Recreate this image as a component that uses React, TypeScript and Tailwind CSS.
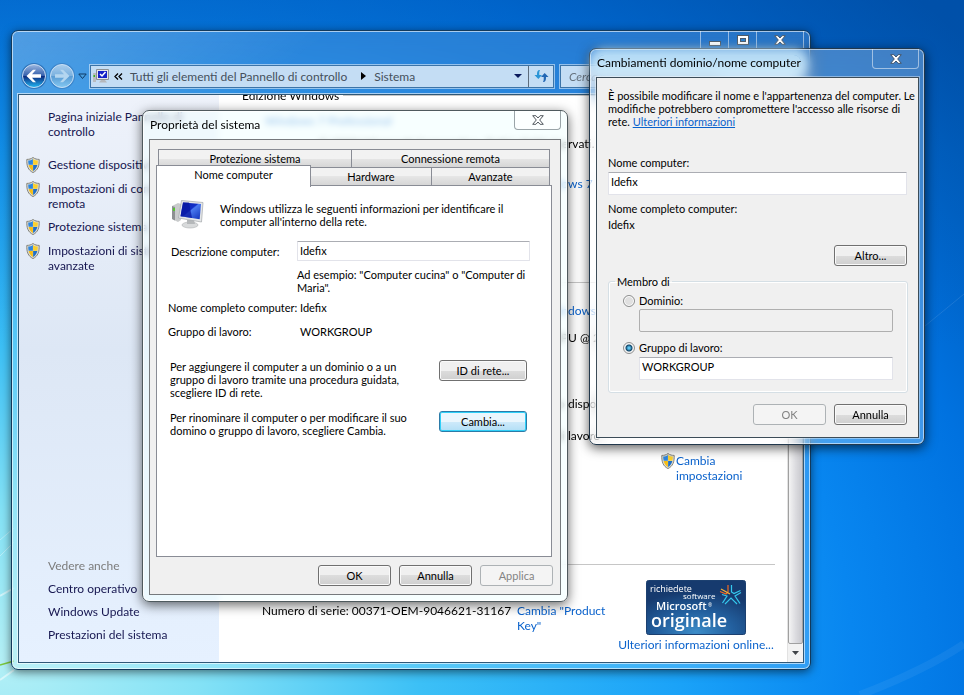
import type { ReactNode } from "react";

const segoe = "font-['Lato','Open_Sans',sans-serif]";

function Shield() {
  return (
    <svg viewBox="0 0 14 16" className="h-4 w-[14px] shrink-0" aria-hidden="true">
      <path d="M7 .5C5 2 3 2.4.8 2.4.6 9 2 13 7 15.6 12 13 13.4 9 13.2 2.4 11 2.4 9 2 7 .5Z" fill="#dcdcd4" stroke="#85857d" />
      <path d="M6.900 2C5.500 3 4 3.500 2.200 3.600c0 1.600.1 2.900.5 4.200h4.200Z" fill="#2e86de" />
      <path d="M7.100 2c1.400 1 2.900 1.500 4.700 1.600 0 1.600-.1 2.900-.5 4.200H7.100Z" fill="#fbd02c" />
      <path d="M6.900 8H2.700c.7 2.800 2 4.700 4.200 6Z" fill="#f6bd14" />
      <path d="M7.100 8h4.200c-.7 2.800-2 4.700-4.200 6Z" fill="#1f6fc8" />
    </svg>
  );
}

function ComputerIcon() {
  return (
    <svg viewBox="0 0 32 29" className="h-[29px] w-8 shrink-0" aria-hidden="true">
      <defs>
        <linearGradient id="screen" x1="0" y1="0" x2="1" y2="1">
          <stop offset="0" stopColor="#0a1ea8" />
          <stop offset="0.45" stopColor="#1230c8" />
          <stop offset="0.5" stopColor="#4a7af0" />
          <stop offset="1" stopColor="#1030b8" />
        </linearGradient>
      </defs>
      <path d="M0 6 6 3l3 1v16l-3 2-6-3Z" fill="#c9cbcc" />
      <path d="M0 6l3 1v13.500l-3-1.500Z" fill="#8d9092" />
      <path d="M1 8h2v3H1Z" fill="#54c52e" />
      <ellipse cx="18" cy="25" rx="8" ry="3" fill="#d8dadb" stroke="#adb0b2" strokeWidth=".6" />
      <path d="M15 20h7l1 4h-8Z" fill="#b5b8ba" />
      <path d="M9.500.5 31 2.500 29.500 22 6.500 18Z" fill="#e4e6e8" stroke="#a4a8ab" strokeWidth=".7" />
      <path d="M11 2.500 29 4l-1.300 15.300L8.500 16.300Z" fill="url(#screen)" />
      <path d="M11 2.500h6l3 15.500-11.500-1.700Z" fill="#0817a0" opacity=".75" />
    </svg>
  );
}

function SystemIcon() {
  return (
    <svg viewBox="0 0 16 14" className="h-[14px] w-4 shrink-0" aria-hidden="true">
      <path d="M0 4h3v9H0Z" fill="#b8bcc0" />
      <path d="M.5 6h1.500v2H.5Z" fill="#35b520" />
      <path d="M3.500.5h12v10h-12Z" fill="#e5e7ea" stroke="#8c9094" />
      <path d="M5 2h9v7H5Z" fill="#1420c8" />
      <path d="m7 5 2 2 3.500-4" stroke="#fff" strokeWidth="1.500" fill="none" />
      <path d="M8 11h4l2 2.500H6Z" fill="#b5b8bc" />
    </svg>
  );
}

function NavButtons() {
  return (
    <div className="flex items-center">
      <button aria-label="Indietro" className="block">
        <svg viewBox="0 0 28 28" className="h-7 w-7" aria-hidden="true">
          <defs>
            <linearGradient id="back" x1="0" y1="0" x2="0" y2="1">
              <stop offset="0" stopColor="#9db8e0" />
              <stop offset=".48" stopColor="#3560ac" />
              <stop offset=".52" stopColor="#0b2c80" />
              <stop offset="1" stopColor="#22b8f4" />
            </linearGradient>
          </defs>
          <circle cx="14" cy="14" r="13" fill="#2a6cb0" opacity=".8" />
          <circle cx="14" cy="14" r="11.500" fill="url(#back)" stroke="#c9dcf2" />
          <path d="M6.500 14 13 7.800h3l-4 4.500h9v3.400h-9l4 4.500h-3Z" fill="#fff" />
        </svg>
      </button>
      <button aria-label="Avanti" className="block">
        <svg viewBox="0 0 28 28" className="h-7 w-7" aria-hidden="true">
          <defs>
            <linearGradient id="forward" x1="0" y1="0" x2="0" y2="1">
              <stop offset="0" stopColor="#a9cdec" />
              <stop offset=".48" stopColor="#7cb2e0" />
              <stop offset=".52" stopColor="#5a9cd4" />
              <stop offset="1" stopColor="#84c8f2" />
            </linearGradient>
          </defs>
          <circle cx="14" cy="14" r="13" fill="#3a80c4" opacity=".8" />
          <circle cx="14" cy="14" r="11.500" fill="url(#forward)" stroke="#c9e0f5" />
          <path d="M21.500 14 15 7.800h-3l4 4.500H7v3.400h9l-4 4.500h3Z" fill="#b4d6f0" />
        </svg>
      </button>
      <button aria-label="Pagine recenti" className="block px-0.5">
        <svg viewBox="0 0 9 7" className="h-[7px] w-[9px]" aria-hidden="true">
          <path d="M.8 1h7.400L4.500 5.500Z" fill="#4aa0e0" stroke="#0e3a66" />
        </svg>
      </button>
    </div>
  );
}

function CloseGlyph({ fill, stroke }: { fill: string; stroke: string }) {
  return (
    <svg viewBox="0 0 12 10" className="h-[10px] w-3" aria-hidden="true">
      <path
        d="M.7.7h3.200L6 3 8.100.7h3.200L7.700 5l3.600 4.300H8.100L6 7 3.900 9.300H.7L4.300 5Z"
        fill={fill}
        stroke={stroke}
      />
    </svg>
  );
}

function PushButton({
  children,
  wide,
  focused,
  disabled,
}: {
  children: ReactNode;
  wide?: boolean;
  focused?: boolean;
  disabled?: boolean;
}) {
  const tone = disabled
    ? "border-[#adb2b5] bg-[#f4f4f4] text-[#838383]"
    : focused
      ? "border-[#2c7ba8] bg-linear-to-b from-[#eaf6fd] from-50% via-[#cfeafa] via-50% to-[#b2dff6] shadow-[inset_0_0_0_1px_#2fd0f8]"
      : "border-[#707070] bg-linear-to-b from-[#f0f0f0] from-50% via-[#dddddd] via-50% to-[#cfcfcf] shadow-[inset_0_0_0_1px_#fafafa]";
  return (
    <button
      disabled={disabled}
      className={`flex h-[21px] items-center justify-center rounded-[3px] border ${wide ? "w-[88px]" : "w-[73px]"} ${tone}`}
    >
      {children}
    </button>
  );
}

function TaskLink({ children }: { children: ReactNode }) {
  return (
    <a href="#" className="flex gap-2">
      <Shield />
      <span className="whitespace-nowrap">{children}</span>
    </a>
  );
}

/* A line whose lead ends where the detail column's second half begins. */
function InfoLine({ lead, tail, link, className }: { lead: string; tail: string; link?: boolean; className: string }) {
  return (
    <p className={`flex whitespace-pre ${link ? "text-[#0a62cc]" : ""} ${className}`}>
      <span className="w-[326px] shrink-0 text-right">{lead}</span>
      <span>{tail}</span>
    </p>
  );
}

function GenuineBadge() {
  return (
    <svg viewBox="0 0 100 55" className="h-[55px] w-[100px]" role="img" aria-label="Software Microsoft originale">
      <defs>
        <radialGradient id="badge" cx=".5" cy=".95" r=".75">
          <stop offset="0" stopColor="#3c8cc8" />
          <stop offset=".5" stopColor="#23609f" />
          <stop offset="1" stopColor="#163a6e" />
        </radialGradient>
      </defs>
      <rect x=".5" y=".5" width="99" height="54" rx="2" fill="url(#badge)" stroke="#1c4070" />
      <g fill="#fff" fontFamily="'Open Sans','Noto Sans',sans-serif">
        <text x="4" y="12" fontSize="9">richiedete</text>
        <text x="37" y="19" fontSize="8">software</text>
        <text x="10" y="30" fontSize="11" fontWeight="600">Microsoft</text>
        <text x="62" y="27" fontSize="5">®</text>
        <text x="5" y="47" fontSize="18" fontWeight="600">originale</text>
      </g>
      <g fill="none" strokeWidth="1.200">
        <path d="M82 5v7l-2 2-6-2.500" stroke="#f26a22" />
        <path d="M84 14 75 9" stroke="#f9b233" />
        <path d="M85.500 5v7l2.500 1.500 6.500-3M95 12.500l-6 3.500 5 7.500M91 24l-6-6-6 6M76.500 23l4.500-7-5-1.500" stroke="#35c8ee" />
      </g>
    </svg>
  );
}

function SystemWindow() {
  return (
    <section
      aria-label="Sistema"
      className={`absolute left-[11px] top-[30px] flex h-[640px] w-[800px] flex-col rounded-[7px] border border-[#123a5c] bg-linear-to-br from-white/30 via-white/15 via-20% to-white/15 px-[6px] pb-[6px] text-[12px] leading-[15px] shadow-[inset_0_0_0_1px_rgba(255,255,255,0.6),0_2px_10px_rgba(0,0,0,0.55)] backdrop-blur-sm ${segoe}`}
    >
      <div className="flex h-[18px] justify-end">
        <div className="flex divide-x divide-white/50 border-x border-white/50">
          <button aria-label="Riduci a icona" className="flex w-[28px] items-center justify-center">
            <span className="mt-1.5 h-[5px] w-3 border border-[#4c5a68] bg-white" />
          </button>
          <button aria-label="Ingrandisci" className="flex w-[28px] items-center justify-center">
            <span className="flex h-[10px] w-3 items-center justify-center border border-[#4c5a68] bg-white">
              <span className="h-1 w-1.5 border border-[#4c5a68] bg-[#2c82d0]" />
            </span>
          </button>
          <button aria-label="Chiudi" className="flex w-[46px] items-center justify-center">
            <CloseGlyph fill="#fff" stroke="#4c5a68" />
          </button>
        </div>
      </div>

      <div className="mt-[13px] flex h-7 items-center pl-[2px]">
        <NavButtons />
        <div className="ml-px flex h-[23px] w-[464px] items-center border border-[#3c74a8] bg-[#c4ddf4] pl-[2px] text-[#45505c] outline outline-white/50">
          <SystemIcon />
          <svg viewBox="0 0 9 7" className="ml-[5px] h-[7px] w-[9px]" aria-hidden="true">
            <path d="M4 .5 1 3.500l3 3M8 .5 5 3.500l3 3" fill="none" stroke="#000" strokeWidth="1.300" />
          </svg>
          <span className="ml-[7px] whitespace-nowrap">Tutti gli elementi del Pannello di controllo</span>
          <svg viewBox="0 0 5 8" className="ml-3.5 mr-2 h-2 w-[5px]" aria-hidden="true">
            <path d="M0 0v8l5-4Z" fill="#000" />
          </svg>
          <span>Sistema</span>
          <button aria-label="Posizioni precedenti" className="ml-auto pr-1.5">
            <svg viewBox="0 0 8 4" className="h-1 w-2" aria-hidden="true">
              <path d="M0 0h8L4 4Z" fill="#0a1a5c" />
            </svg>
          </button>
          <button aria-label="Aggiorna" className="flex h-full w-[25px] items-center justify-center border-l border-[#5c6c7c]">
            <svg viewBox="0 0 15 14" className="h-[14px] w-[15px]" aria-hidden="true">
              <path d="M6 1C3.500 1 3 2.500 3 6H.5L4.300 10 8 6H5.300C5.300 4 5 3 6 1Z" fill="#2b95d6" />
              <path d="M9 13c2.500 0 3-1.500 3-5h2.500L10.700 4 7 8h2.700c0 2 .3 3-.7 5Z" fill="#2166b4" />
            </svg>
          </button>
        </div>
        <input
          aria-label="Cerca nel Pannello di controllo"
          placeholder="Cerca nel Pannello di controllo"
          className="ml-[6px] h-[23px] min-w-0 flex-1 border border-[#3c74a8] bg-[#c4ddf4] px-2 italic outline outline-white/50 placeholder:text-[#66727e]"
        />
      </div>

      <div className="mt-[4px] flex min-h-0 flex-1 overflow-hidden border border-[#2f5878] bg-white outline outline-white/60">
        <nav className="flex w-[200px] shrink-0 flex-col justify-between bg-linear-to-b from-[#eef2fa] via-[#dde7f5] via-45% to-[#e6f1ff] text-[#161650]">
          <div className="flex flex-col gap-2 pl-[7px] pt-[14px]">
            <a href="#" className="mb-[10px] whitespace-nowrap pl-[22px]">
              Pagina iniziale Pannello di<br />controllo
            </a>
            <TaskLink>Gestione dispositivi</TaskLink>
            <TaskLink>Impostazioni di connessione<br />remota</TaskLink>
            <TaskLink>Protezione sistema</TaskLink>
            <TaskLink>Impostazioni di sistema<br />avanzate</TaskLink>
          </div>
          <div className="flex flex-col gap-2 pb-[20px] pl-[29px]">
            <span className="text-[#7c7c7c]">Vedere anche</span>
            <a href="#">Centro operativo</a>
            <a href="#">Windows Update</a>
            <a href="#">Prestazioni del sistema</a>
          </div>
        </nav>

        <main className="min-w-0 flex-1 overflow-hidden pl-[23px] pr-3">
          <h2 className="-mt-[7px] flex items-center gap-1">
            Edizione Windows<span className="h-px flex-1 bg-[#c6c6c6]" />
          </h2>
          <p className="mt-[10px] pl-[23px] text-[#0a62cc]">Windows 7 Professional</p>
          <InfoLine className="mt-2" lead="© 2009 Microsoft Corporation. Tutti i diritti rise" tail="rvati." />
          <InfoLine className="mt-[25px]" link lead="Ottieni ulteriori funzionalità con Windo" tail="ws 7" />
          <h2 className="mt-[84px] flex items-center gap-1">
            Sistema<span className="h-px flex-1 bg-[#c6c6c6]" />
          </h2>
          <InfoLine className="mt-[13px]" link lead="Indice prestazioni Win" tail="dows" />
          <InfoLine className="mt-3" lead="Intel(R) Core(TM)2 CP" tail="U @ 2.40GHz" />
          <InfoLine className="mt-[51px]" lead="Nessun input penna o tocco " tail="disponibile" />
          <InfoLine className="mt-[17px]" lead="Impostazioni relative a gruppo di " tail="lavoro" />
          <a href="#" className="mt-[10px] flex gap-px pl-[419px] text-[#0a62cc]">
            <Shield />
            <span>Cambia<br />impostazioni</span>
          </a>
          <h2 className="mt-[74px] flex items-center gap-1">
            Attivazione di Windows<span className="h-px flex-1 bg-[#c6c6c6]" />
          </h2>
          <div className="mt-[8px] flex pl-[20px]">
            <p className="w-[255px] shrink-0 whitespace-nowrap pt-[23px]">Numero di serie: 00371-OEM-9046621-31167</p>
            <a href="#" className="w-[100px] shrink-0 pt-[23px] text-[#0a62cc]">Cambia "Product<br />Key"</a>
            <div className="flex flex-1 flex-col items-center gap-0.5 text-[#0a62cc]">
              <GenuineBadge />
              <a href="#" className="whitespace-nowrap">Ulteriori informazioni online...</a>
            </div>
          </div>
        </main>

        <div className="flex w-[16px] flex-col border-l border-[#e2e2e2] bg-[#f2f2f2]">
          <div className="flex-1 rounded-[2px] border border-[#a0a0a0] bg-linear-to-r from-[#f4f4f4] via-[#dcdce0] to-[#c8c8cd]" />
          <button aria-label="Scorri in basso" className="flex h-[18px] items-center justify-center">
            <svg viewBox="0 0 7 4" className="h-1 w-[7px]" aria-hidden="true">
              <path d="M0 0h7L3.500 4Z" fill="#404448" />
            </svg>
          </button>
        </div>
      </div>
    </section>
  );
}

const tabTone = "h-[19px] border border-[#898c95] bg-linear-to-b from-[#f2f2f2] from-50% via-[#e6e6e6] via-50% to-[#d6d6d6]";

function PropertiesDialog() {
  return (
    <section
      role="dialog"
      aria-label="Proprietà del sistema"
      className="absolute left-[142px] top-[110px] flex h-[492px] w-[426px] flex-col rounded-[7px] border border-[#4f5a5e] bg-[#f2ffff]/60 px-[6px] pb-[6px] font-['Lato','Liberation_Sans',sans-serif] text-[11px] leading-[13px] shadow-[inset_0_0_0_1px_rgba(255,255,255,0.8),0_3px_12px_rgba(0,0,0,0.6)] backdrop-blur-[3px]"
    >
      <header className="flex h-[28px] items-start justify-between pl-px">
        <h1 className={`pt-[6px] text-[12px] leading-[15px] ${segoe}`}>Proprietà del sistema</h1>
        <button
          aria-label="Chiudi"
          className="flex h-[19px] w-[47px] items-center justify-center rounded-b-[4px] border border-t-0 border-[#9aa4a8] bg-white/60"
        >
          <CloseGlyph fill="#fff" stroke="#50585e" />
        </button>
      </header>

      <div className="flex flex-1 flex-col border border-[#75797c] bg-[#f0f0f0] pl-[6px] pr-[7px] pt-[9px]">
        <div role="tablist" className="mr-px px-[2px]">
          <div className="flex">
            <button role="tab" aria-selected="false" className={`w-[194px] ${tabTone}`}>Protezione sistema</button>
            <button role="tab" aria-selected="false" className={`-ml-px flex-1 ${tabTone}`}>Connessione remota</button>
          </div>
          <div className="-mt-px flex items-end">
            <button role="tab" aria-selected="true" className="relative -mb-px -ml-[2px] -mt-[2px] h-[22px] w-[155px] border border-b-0 border-[#898c95] bg-white pb-1">
              Nome computer
            </button>
            <button role="tab" aria-selected="false" className={`-ml-px w-[122px] ${tabTone}`}>Hardware</button>
            <button role="tab" aria-selected="false" className={`-ml-px flex-1 ${tabTone}`}>Avanzate</button>
          </div>
        </div>

        <div role="tabpanel" className="-mt-px mr-px flex h-[372px] flex-col border border-[#898c95] bg-white pr-[21px]">
          <div className="flex gap-4 pl-[15px] pt-[14px]">
            <ComputerIcon />
            <p className="whitespace-nowrap pt-[2px]">
              Windows utilizza le seguenti informazioni per identificare il<br />computer all'interno della rete.
            </p>
          </div>
          <div className="mt-[12px] flex items-center pl-[14px]">
            <label htmlFor="description" className="w-[126px] shrink-0">Descrizione computer:</label>
            <input
              id="description"
              defaultValue="Idefix"
              className="h-[20px] min-w-0 flex-1 rounded-[1px] border border-[#e2e3ea] border-t-[#abadb3] bg-white px-[2px] pb-[2px]"
            />
          </div>
          <p className="mt-[7px] pl-[140px]">
            Ad esempio: "Computer cucina" o "Computer di<br />Maria".
          </p>
          <dl className="mt-[7px] grid grid-cols-[132px_1fr] gap-y-[11px] pl-[11px]">
            <dt>Nome completo computer:</dt>
            <dd>Idefix</dd>
            <dt>Gruppo di lavoro:</dt>
            <dd>WORKGROUP</dd>
          </dl>
          <div className="mt-[22px] flex items-start justify-between pl-[13px] pr-[3px]">
            <p>
              Per aggiungere il computer a un dominio o a un<br />gruppo di lavoro tramite una procedura guidata,<br />
              scegliere ID di rete.
            </p>
            <PushButton wide>ID di rete...</PushButton>
          </div>
          <div className="mt-3 flex items-start justify-between pl-[13px] pr-[3px]">
            <p>
              Per rinominare il computer o per modificare il suo<br />domino o gruppo di lavoro, scegliere Cambia.
            </p>
            <PushButton wide focused>Cambia...</PushButton>
          </div>
        </div>

        <div className="mt-[8px] flex justify-end gap-2">
          <PushButton>OK</PushButton>
          <PushButton>Annulla</PushButton>
          <PushButton disabled>Applica</PushButton>
        </div>
      </div>
    </section>
  );
}

function DomainDialog() {
  return (
    <section
      role="dialog"
      aria-label="Cambiamenti dominio/nome computer"
      className="absolute left-[589px] top-[48px] flex h-[397px] w-[336px] flex-col rounded-[7px] border border-[#22384c] bg-white/25 pb-[6px] pl-[6px] pr-[5px] font-['Lato','Liberation_Sans',sans-serif] text-[11px] leading-[13px] shadow-[inset_0_0_0_1px_rgba(255,255,255,0.55),0_3px_12px_rgba(0,0,0,0.65)] backdrop-blur-sm"
    >
      <header className="flex h-[28px] items-start justify-between pl-px">
        <h1 className={`mt-[6px] rounded-full bg-[#d4f2ff]/70 text-[12px] leading-[15px] shadow-[0_0_9px_7px_rgba(212,242,255,0.7)] ${segoe}`}>
          Cambiamenti dominio/nome computer
        </h1>
        <button
          aria-label="Chiudi"
          className="flex h-[20px] w-[47px] items-center justify-center rounded-b-[4px] border border-t-0 border-white/50"
        >
          <CloseGlyph fill="#fff" stroke="#42546a" />
        </button>
      </header>

      <div className="flex flex-1 flex-col border border-[#3c4c58] bg-[#f0f0f0] px-[11px] pt-[11px] outline outline-white/40">
        <p className="whitespace-nowrap">
          È possibile modificare il nome e l'appartenenza del computer. Le<br />
          modifiche potrebbero compromettere l'accesso alle risorse di<br />
          rete. <a href="#" className="text-[#0a62cc] underline">Ulteriori informazioni</a>
        </p>
        <label htmlFor="computer-name" className="mt-[28px]">Nome computer:</label>
        <input
          id="computer-name"
          defaultValue="Idefix"
          className="mt-[3px] h-[23px] rounded-[1px] border border-[#e2e3ea] border-t-[#abadb3] bg-white px-[2px] pb-[4px]"
        />
        <p className="mt-[7px]">Nome completo computer:</p>
        <p className="mt-[3px]">Idefix</p>
        <div className="mt-[14px] flex justify-end">
          <PushButton>Altro...</PushButton>
        </div>

        <fieldset className="mt-[9px] rounded-[3px] border border-[#d5dfe5] pb-[12px] pl-[14px] pr-[14px] shadow-[inset_0_0_0_1px_#fff]">
          <legend className="-ml-[8px] px-[2px]">Membro di</legend>
          <div className="mt-[6px] flex items-center gap-1">
            <input
              type="radio"
              id="domain"
              name="member"
              className="h-3 w-3 appearance-none rounded-full border border-[#8e8f8f] bg-[#e0e0e0] shadow-[inset_0_0_0_1px_#fff]"
            />
            <label htmlFor="domain">Dominio:</label>
          </div>
          <input aria-label="Nome dominio" disabled className="ml-4 mt-[2px] block h-[23px] w-[254px] rounded-[2px] border border-[#afafaf] bg-[#f0f0f0]" />
          <div className="mt-[9px] flex items-center gap-1">
            <input
              type="radio"
              id="workgroup"
              name="member"
              defaultChecked
              className="h-3 w-3 appearance-none rounded-full border border-[#8e8f8f] bg-[radial-gradient(circle,#5cc4f0_0_1px,#0f4468_3px,#f4f4f4_4px)]"
            />
            <label htmlFor="workgroup">Gruppo di lavoro:</label>
          </div>
          <input
            aria-label="Nome gruppo di lavoro"
            defaultValue="WORKGROUP"
            className="ml-4 mt-[3px] block h-[23px] w-[254px] rounded-[1px] border border-[#e2e3ea] border-t-[#abadb3] bg-white px-[2px] pb-[4px]"
          />
        </fieldset>

        <div className="mt-[11px] flex justify-end gap-2">
          <PushButton disabled>OK</PushButton>
          <PushButton>Annulla</PushButton>
        </div>
      </div>
    </section>
  );
}

export default function App() {
  return (
    <div className="relative h-screen w-full overflow-hidden bg-[radial-gradient(104%_108%_at_0%_95%,#b4f0f6_0%,#84e2f6_20%,#3cc0f6_42%,#1aa2f8_68%,#0886f0_85%,#0072e0_100%,#004a9e_127%)] text-black">
      <div className="h-full bg-[linear-gradient(180deg,rgba(0,86,180,0.5)_0%,rgba(0,96,190,0.3)_22%,rgba(0,110,220,0)_50%)]">
        <svg viewBox="0 0 964 695" preserveAspectRatio="none" className="h-full w-full" aria-hidden="true">
          <g fill="none" stroke="#fff">
            <path d="M0 596 14 588M0 680l14-10" strokeWidth="2" opacity=".5" />
            <path d="M0 556 14 542M0 540l14-12" opacity=".35" />
            <path d="M860 695Q925 670 964 644" strokeWidth="8" opacity=".06" />
            <path d="M925 326 964 294" opacity=".1" />
          </g>
          <path d="M0 665 14 661" stroke="#7cc83c" strokeWidth="1.500" />
        </svg>
      </div>
      <SystemWindow />
      <PropertiesDialog />
      <DomainDialog />
    </div>
  );
}
